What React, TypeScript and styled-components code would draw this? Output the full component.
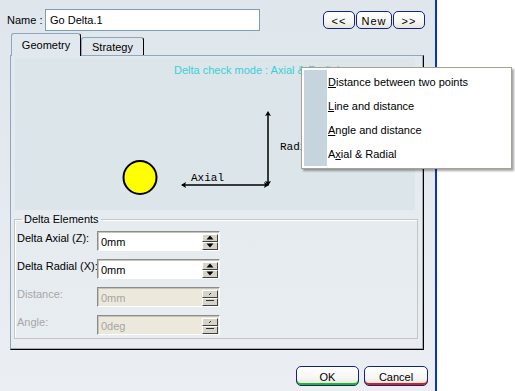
import React from "react";
import styled, { createGlobalStyle } from "styled-components";

const Global = createGlobalStyle`
  html, body { margin: 0; padding: 0; background: #ffffff; }
  body { font-family: "Liberation Sans", Arial, sans-serif; font-size: 11px; color: #000; }
  * { box-sizing: border-box; }
`;

const Page = styled.div`
  position: relative;
  width: 515px;
  height: 391px;
  overflow: hidden;
  display: flex;
`;

const Dialog = styled.div`
  width: 437px;
  height: 391px;
  border-right: 2px solid #0a34c0;
  background: linear-gradient(180deg, #dfe6ec 0%, #e4eaef 50%, #ebeff3 100%);
  display: flex;
  flex-direction: column;
`;

const TopRow = styled.div`
  display: flex;
  align-items: center;
  height: 22px;
  margin-top: 9px;
  padding-left: 7px;
  padding-right: 10px;
`;

const Label = styled.span<{ $disabled?: boolean }>`
  font-size: 11px;
  line-height: 13px;
  color: ${(p) => (p.$disabled ? "#a7a7a7" : "#000")};
  white-space: nowrap;
`;

const NameLabel = styled(Label)`
  width: 38px;
`;

const NameInput = styled.div`
  width: 215px;
  height: 22px;
  border: 1px solid #7f9db9;
  background: #fff;
  display: flex;
  align-items: center;
  padding-left: 4px;
  font-size: 11px;
`;

const Spacer = styled.div`
  flex: 1;
`;

const ButtonGroup = styled.div`
  display: flex;
  gap: 1px;
`;

const RoundButton = styled.div<{ $w: number; $h: number; $accent?: string }>`
  width: ${(p) => p.$w}px;
  height: ${(p) => p.$h}px;
  border: 1px solid #16247a;
  border-radius: 5px;
  background: linear-gradient(180deg, #ffffff 0%, #f6f6f4 60%, #e6e5df 100%);
  display: flex;
  align-items: center;
  justify-content: center;
  font-size: 11px;
  padding-top: 1px;
  box-shadow: ${(p) => (p.$accent ? `inset 0 -2px 0 ${p.$accent}` : "none")};
  letter-spacing: ${(p) => (p.$accent ? "0" : "1px")};
`;

const TabRow = styled.div`
  display: flex;
  align-items: flex-end;
  margin-top: 2px;
  padding-left: 11px;
  height: 22px;
  position: relative;
  z-index: 1;
`;

const Tab = styled.div<{ $active?: boolean; $w: number }>`
  width: ${(p) => p.$w}px;
  height: ${(p) => (p.$active ? 23 : 18)}px;
  margin-bottom: ${(p) => (p.$active ? -1 : 0)}px;
  border: 1px solid #8fa6bd;
  border-right: 1px solid #000;
  border-bottom: none;
  border-radius: 3px 3px 0 0;
  background: ${(p) => (p.$active ? "#e2e9ee" : "#dfe6ec")};
  display: flex;
  align-items: ${(p) => (p.$active ? "flex-start" : "center")};
  padding-top: ${(p) => (p.$active ? 5 : 0)}px;
  justify-content: center;
  font-size: 11px;
`;

const Panel = styled.div`
  margin-left: 10px;
  width: 414px;
  height: 295px;
  border-top: 1px solid #8fa6bd;
  border-left: 1px solid #8fa6bd;
  border-right: 1px solid #000;
  border-bottom: 1px solid #000;
  box-shadow: inset -1px -1px 0 #a4aab0;
  background: linear-gradient(180deg, #e2e9ee 0%, #e8edf1 100%);
  padding: 2px 0 0 4px;
  display: flex;
  flex-direction: column;
`;

const Diagram = styled.div`
  width: 400px;
  height: 152px;
  background: #dbe5ea;
  display: flex;
  flex-direction: column;
`;

const Caption = styled.div`
  padding-left: 159px;
  padding-top: 6px;
  height: 19px;
  color: #3ccfd6;
  font-size: 11px;
  line-height: 13px;
  white-space: nowrap;
`;

const Fieldset = styled.fieldset`
  margin: 3px 0 0 -1px;
  width: 404px;
  padding: 5px 2px 3px 2px;
  border: 1px solid #c3c6c2;
  box-shadow: 1px 1px 0 #ffffff inset;
  display: flex;
  flex-direction: column;
  gap: 8px;
`;

const Legend = styled.legend`
  margin-left: 5px;
  padding: 0 2px;
  font-size: 11px;
  line-height: 13px;
`;

const FieldRow = styled.div`
  display: flex;
  align-items: center;
  height: 20px;
`;

const RowLabel = styled(Label)`
  width: 80px;
  align-self: flex-start;
  margin-top: 1px;
`;

const Field = styled.div<{ $disabled?: boolean }>`
  width: 123px;
  height: 20px;
  border: 1px solid;
  border-color: #8c8c8c #ffffff #ffffff #8c8c8c;
  box-shadow: inset 1px 1px 0 #c6c3ba;
  background: ${(p) => (p.$disabled ? "#ece9dc" : "#ffffff")};
  display: flex;
  align-items: center;
  padding: 2px 1px 1px 3px;
`;

const FieldText = styled.span<{ $disabled?: boolean }>`
  flex: 1;
  font-size: 11px;
  padding-top: 1px;
  color: ${(p) => (p.$disabled ? "#a5a5a5" : "#000")};
`;

const Spin = styled.div`
  width: 16px;
  height: 16px;
  display: flex;
  flex-direction: column;
`;

const SpinHalf = styled.div`
  height: 8px;
  background: #d6d3c9;
  border: 1px solid;
  border-color: #ffffff #404040 #404040 #ffffff;
  display: flex;
  align-items: center;
  justify-content: center;
`;

const Footer = styled.div`
  display: flex;
  justify-content: flex-end;
  gap: 5px;
  margin-top: 16px;
  padding-right: 7px;
`;

const Menu = styled.div`
  position: absolute;
  left: 301px;
  top: 67px;
  width: 211px;
  border: 1px solid #a3a293;
  background: #ffffff;
  padding: 2px;
  box-shadow: 2px 2px 2px rgba(0, 0, 0, 0.35);
  display: flex;
  flex-direction: column;
  z-index: 5;
`;

const MenuItem = styled.div`
  display: flex;
  height: 24px;
`;

const MenuStripe = styled.div`
  width: 23px;
  background: #c6d4de;
`;

const MenuLabel = styled.div`
  padding-left: 1px;
  display: flex;
  align-items: center;
  font-size: 11px;
  white-space: pre;
`;

function SpinBox({ disabled }: { disabled?: boolean }) {
  return (
    <Spin>
      <SpinHalf>
        <svg width="8" height="5" viewBox="0 0 8 5">
          {disabled ? (
            <path d="M3 4 L5 2" stroke="#303030" strokeWidth="1" />
          ) : (
            <path d="M4 0.5 L7.5 4.5 L0.5 4.5 Z" fill="#000" />
          )}
        </svg>
      </SpinHalf>
      <SpinHalf>
        <svg width="8" height="5" viewBox="0 0 8 5">
          {disabled ? (
            <path d="M0 1.5 L8 1.5" stroke="#303030" strokeWidth="1" />
          ) : (
            <path d="M0.5 0.5 L7.5 0.5 L4 4.5 Z" fill="#000" />
          )}
        </svg>
      </SpinHalf>
    </Spin>
  );
}

const rows = [
  { label: "Delta Axial (Z):", value: "0mm", disabled: false },
  { label: "Delta Radial (X):", value: "0mm", disabled: false },
  { label: "Distance:", value: "0mm", disabled: true },
  { label: "Angle:", value: "0deg", disabled: true },
];

const menuItems: [string, string, string][] = [
  ["", "D", "istance between two points"],
  ["", "L", "ine and distance"],
  ["", "A", "ngle and distance"],
  ["A", "x", "ial & Radial"],
];

export default function App() {
  return (
    <Page>
      <Global />
      <Dialog>
        <TopRow>
          <NameLabel>Name :</NameLabel>
          <NameInput>Go Delta.1</NameInput>
          <Spacer />
          <ButtonGroup>
            <RoundButton $w={32} $h={18}>&lt;&lt;</RoundButton>
            <RoundButton $w={36} $h={18}>New</RoundButton>
            <RoundButton $w={32} $h={18}>&gt;&gt;</RoundButton>
          </ButtonGroup>
        </TopRow>
        <TabRow>
          <Tab $active $w={70}>Geometry</Tab>
          <Tab $w={63}>Strategy</Tab>
        </TabRow>
        <Panel>
          <Diagram>
            <Caption>Delta check mode : Axial &amp; Radial</Caption>
            <svg width="400" height="133" viewBox="0 0 400 133">
              <circle cx="125" cy="100.5" r="16.5" fill="#ffff00" stroke="#000" strokeWidth="2" />
              <line x1="167" y1="108" x2="253" y2="108" stroke="#000" strokeWidth="1.5" />
              <line x1="253" y1="36" x2="253" y2="108" stroke="#000" strokeWidth="1.5" />
              <path d="M166 108 L171 105 L170 108 L171 111 Z" fill="#000" />
              <path d="M254 108 L249 105 L250 108 L249 111 Z" fill="#000" />
              <path d="M253 34 L250 39 L253 38 L256 39 Z" fill="#000" />
              <path d="M253 109 L250 104 L253 105 L256 104 Z" fill="#000" />
              <text x="176" y="104" fontFamily="'Liberation Mono', 'DejaVu Sans Mono', monospace" fontSize="11" fill="#000">Axial</text>
              <text x="265" y="73" fontFamily="'Liberation Mono', 'DejaVu Sans Mono', monospace" fontSize="11" fill="#000">Radial</text>
            </svg>
          </Diagram>
          <Fieldset>
            <Legend>Delta Elements</Legend>
            {rows.map((r) => (
              <FieldRow key={r.label}>
                <RowLabel $disabled={r.disabled}>{r.label}</RowLabel>
                <Field $disabled={r.disabled}>
                  <FieldText $disabled={r.disabled}>{r.value}</FieldText>
                  <SpinBox disabled={r.disabled} />
                </Field>
              </FieldRow>
            ))}
          </Fieldset>
        </Panel>
        <Footer>
          <RoundButton $w={63} $h={20} $accent="#22b822">OK</RoundButton>
          <RoundButton $w={64} $h={20} $accent="#d02020">Cancel</RoundButton>
        </Footer>
      </Dialog>
      <Menu>
        {menuItems.map(([pre, u, rest]) => (
          <MenuItem key={u + rest}>
            <MenuStripe />
            <MenuLabel>
              {pre}
              <u>{u}</u>
              {rest}
            </MenuLabel>
          </MenuItem>
        ))}
      </Menu>
    </Page>
  );
}
